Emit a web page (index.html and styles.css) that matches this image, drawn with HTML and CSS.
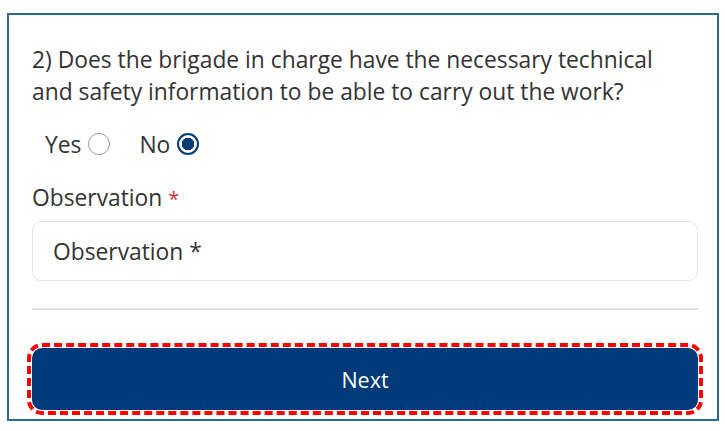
FILE: index.html
```html
<!DOCTYPE html>
<html lang="en">
<head>
    <meta charset="UTF-8">
    <meta name="viewport" content="width=device-width, initial-scale=1.0">
    <title>Checklist</title>
    <link rel="stylesheet" href="styles.css">
</head>
<body>
    <div class="card">
        <p class="question">2) Does the brigade in charge have the necessary technical and safety information to be able to carry out the work?</p>
        <div class="options">
            <label class="option">Yes <input type="radio" name="q2" value="yes"></label>
            <label class="option">No <input type="radio" name="q2" value="no" checked></label>
        </div>
        <label class="field-label" for="observation">Observation <span class="req">*</span></label>
        <input class="field" id="observation" type="text" placeholder="Observation *">
        <hr class="divider">
        <button class="next-button">Next</button>
    </div>
</body>
</html>
```

FILE: styles.css
```css
* {
    margin: 0;
    padding: 0;
    box-sizing: border-box;
}
body {
    font-family: 'Open Sans', 'Noto Sans', sans-serif;
    background: #fff;
    color: #333;
}
.card {
    margin: 13px 0 0 7px;
    width: 712px;
    height: 408px;
    border: 2px solid #2b6a94;
    padding: 29px 19px 0 23px;
    display: flex;
    flex-direction: column;
}
.question {
    font-size: 22.8px;
    line-height: 32px;
    padding-right: 6px;
}
.options {
    display: flex;
    gap: 29px;
    margin: 21px 0 0 13px;
    height: 30px;
    align-items: center;
}
.option {
    display: flex;
    align-items: center;
    gap: 7px;
    font-size: 22.8px;
}
.option input {
    appearance: none;
    width: 22px;
    height: 22px;
    border: 1.5px solid #9a9aa2;
    border-radius: 50%;
    background: #fff;
}
.option input:checked {
    border: 2px solid #003a7a;
    background: radial-gradient(circle, #003a7a 0 6px, #fff 6.5px);
}
.field-label {
    margin-top: 24px;
    font-size: 22.8px;
    line-height: 30px;
}
.req {
    color: #e0303a;
    font-size: 20px;
}
.field {
    margin-top: 7px;
    height: 60px;
    border: 1.5px solid #e1e4e8;
    border-radius: 9px;
    padding: 0 20px;
    font-family: inherit;
    font-size: 22.8px;
    outline: none;
}
.field::placeholder {
    color: #333;
}
.divider {
    margin-top: 27px;
    border: none;
    height: 2px;
    background: #dfe2e6;
}
.next-button {
    margin-top: 38px;
    height: 62px;
    background: #003a7a;
    color: #fff;
    border: none;
    border-radius: 10px;
    font-family: inherit;
    font-size: 21.5px;
    outline: 4px dashed #f00;
    outline-offset: 1px;
}
```
